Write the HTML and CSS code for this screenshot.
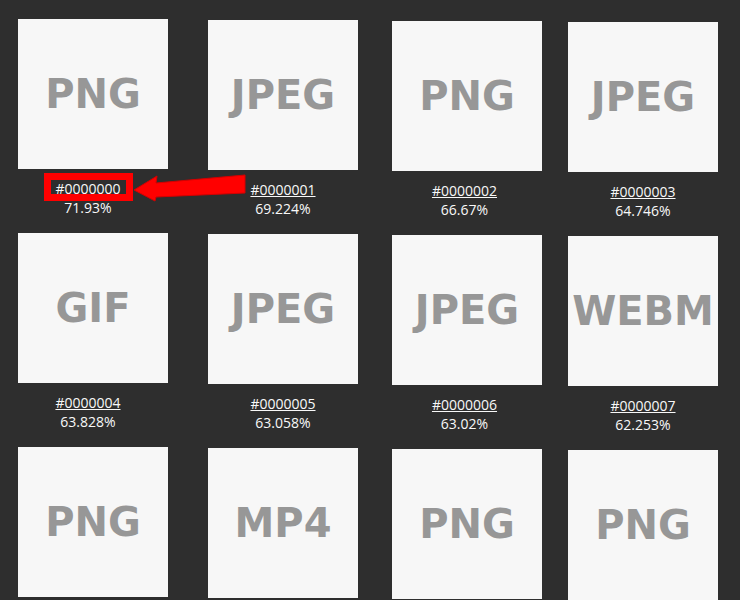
FILE: index.html
```html
<!DOCTYPE html>
<html lang="en">
<head>
  <meta charset="UTF-8">
  <meta name="viewport" content="width=device-width, initial-scale=1.0">
  <title>Similar files</title>
  <link rel="stylesheet" href="styles.css">
</head>
<body>
  <div id="results">
    <div class="item">
      <div class="thumb">PNG</div>
      <div class="caption"><a href="#">#0000000</a><br>71.93%</div>
    </div>
    <div class="item">
      <div class="thumb">JPEG</div>
      <div class="caption"><a href="#">#0000001</a><br>69.224%</div>
    </div>
    <div class="item">
      <div class="thumb">PNG</div>
      <div class="caption"><a href="#">#0000002</a><br>66.67%</div>
    </div>
    <div class="item">
      <div class="thumb">JPEG</div>
      <div class="caption"><a href="#">#0000003</a><br>64.746%</div>
    </div>

    <div class="item">
      <div class="thumb">GIF</div>
      <div class="caption"><a href="#">#0000004</a><br>63.828%</div>
    </div>
    <div class="item">
      <div class="thumb">JPEG</div>
      <div class="caption"><a href="#">#0000005</a><br>63.058%</div>
    </div>
    <div class="item">
      <div class="thumb">JPEG</div>
      <div class="caption"><a href="#">#0000006</a><br>63.02%</div>
    </div>
    <div class="item">
      <div class="thumb">WEBM</div>
      <div class="caption"><a href="#">#0000007</a><br>62.253%</div>
    </div>

    <!-- last row runs off the bottom of the view -->
    <div class="item">
      <div class="thumb">PNG</div>
    </div>
    <div class="item">
      <div class="thumb">MP4</div>
    </div>
    <div class="item">
      <div class="thumb">PNG</div>
    </div>
    <div class="item">
      <div class="thumb">PNG</div>
    </div>
  </div>

  <!-- annotation -->
  <div class="highlight"></div>
  <svg class="arrow" width="120" height="34" viewBox="0 0 120 34">
    <polygon points="4,20 27,6 26,13 115,5 115,23 26,27 25,31" fill="#ff0000" stroke="#d40000" stroke-width="1" stroke-linejoin="round"/>
  </svg>
</body>
</html>
```

FILE: styles.css
```css
body {
  margin: 0;
  height: 600px;
  overflow: hidden;
  position: relative;
  background-color: #2e2e2e;
  font-family: "Open Sans", "Noto Sans", sans-serif;
}

#results {
  display: grid;
  grid-template-columns: 186px 194px 174px 178px;
  row-gap: 13px;
  padding-top: 19px;
}

.item {
  display: flex;
  flex-direction: column;
  align-items: center;
}

.item:nth-child(4n+2) {
  margin-top: 1px;
}

.item:nth-child(4n+3) {
  margin-top: 2px;
}

.item:nth-child(4n) {
  margin-top: 3px;
}

.thumb {
  width: 150px;
  height: 150px;
  background-color: #f7f7f7;
  color: #979797;
  font-family: "DejaVu Sans", sans-serif;
  font-weight: bold;
  font-size: 40px;
  display: flex;
  align-items: center;
  justify-content: center;
}

.caption {
  margin-top: 10px;
  font-size: 14px;
  line-height: 19px;
  color: #f8f8f8;
  text-align: center;
}

.item:nth-child(4n+1) .caption {
  margin-right: 10px;
}

.item:nth-child(4n+3) .caption {
  margin-right: 5px;
}

.caption a {
  color: #f8f8f8;
  text-decoration: underline;
}

.highlight {
  position: absolute;
  left: 44px;
  top: 173px;
  width: 75px;
  height: 14px;
  border: 7px solid #ff0000;
}

.arrow {
  position: absolute;
  left: 130px;
  top: 170px;
}
```
